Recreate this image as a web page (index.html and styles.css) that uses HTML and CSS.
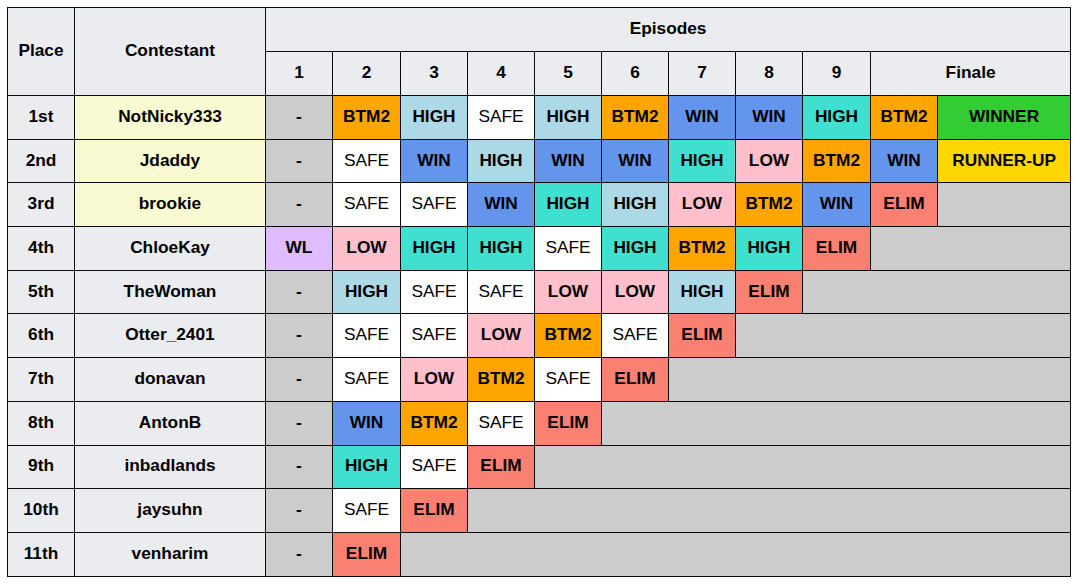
FILE: index.html
```html
<!DOCTYPE html>
<html>
<head>
<meta charset="utf-8">
<link rel="stylesheet" href="styles.css">
</head>
<body>
<div class="wrap">
<table class="progress">
  <colgroup>
    <col class="c67"><col class="c191">
    <col class="c67"><col class="c68"><col class="c67"><col class="c67"><col class="c67"><col class="c67"><col class="c67"><col class="c67"><col class="c68">
    <col class="c67"><col class="c133">
  </colgroup>
  <thead>
    <tr class="hrow">
      <th rowspan="2">Place</th>
      <th rowspan="2">Contestant</th>
      <th colspan="11">Episodes</th>
    </tr>
    <tr class="hrow">
      <th>1</th><th>2</th><th>3</th><th>4</th><th>5</th><th>6</th><th>7</th><th>8</th><th>9</th>
      <th colspan="2">Finale</th>
    </tr>
  </thead>
  <tbody>
    <tr>
      <th>1st</th><td class="name top">NotNicky333</td>
      <td class="na">-</td><td class="btm2">BTM2</td><td class="high">HIGH</td><td class="safe">SAFE</td><td class="high">HIGH</td><td class="btm2">BTM2</td><td class="win">WIN</td><td class="win">WIN</td><td class="high2">HIGH</td><td class="btm2">BTM2</td><td class="winner">WINNER</td>
    </tr>
    <tr>
      <th>2nd</th><td class="name top">Jdaddy</td>
      <td class="na">-</td><td class="safe">SAFE</td><td class="win">WIN</td><td class="high">HIGH</td><td class="win">WIN</td><td class="win">WIN</td><td class="high2">HIGH</td><td class="low">LOW</td><td class="btm2">BTM2</td><td class="win">WIN</td><td class="runner">RUNNER-UP</td>
    </tr>
    <tr>
      <th>3rd</th><td class="name top">brookie</td>
      <td class="na">-</td><td class="safe">SAFE</td><td class="safe">SAFE</td><td class="win">WIN</td><td class="high2">HIGH</td><td class="high">HIGH</td><td class="low">LOW</td><td class="btm2">BTM2</td><td class="win">WIN</td><td class="elim">ELIM</td><td class="na"></td>
    </tr>
    <tr>
      <th>4th</th><td class="name">ChloeKay</td>
      <td class="wl">WL</td><td class="low">LOW</td><td class="high2">HIGH</td><td class="high2">HIGH</td><td class="safe">SAFE</td><td class="high2">HIGH</td><td class="btm2">BTM2</td><td class="high2">HIGH</td><td class="elim">ELIM</td><td class="na" colspan="2"></td>
    </tr>
    <tr>
      <th>5th</th><td class="name">TheWoman</td>
      <td class="na">-</td><td class="high">HIGH</td><td class="safe">SAFE</td><td class="safe">SAFE</td><td class="low">LOW</td><td class="low">LOW</td><td class="high">HIGH</td><td class="elim">ELIM</td><td class="na" colspan="3"></td>
    </tr>
    <tr>
      <th>6th</th><td class="name">Otter_2401</td>
      <td class="na">-</td><td class="safe">SAFE</td><td class="safe">SAFE</td><td class="low">LOW</td><td class="btm2">BTM2</td><td class="safe">SAFE</td><td class="elim">ELIM</td><td class="na" colspan="4"></td>
    </tr>
    <tr>
      <th>7th</th><td class="name">donavan</td>
      <td class="na">-</td><td class="safe">SAFE</td><td class="low">LOW</td><td class="btm2">BTM2</td><td class="safe">SAFE</td><td class="elim">ELIM</td><td class="na" colspan="5"></td>
    </tr>
    <tr>
      <th>8th</th><td class="name">AntonB</td>
      <td class="na">-</td><td class="win">WIN</td><td class="btm2">BTM2</td><td class="safe">SAFE</td><td class="elim">ELIM</td><td class="na" colspan="6"></td>
    </tr>
    <tr>
      <th>9th</th><td class="name">inbadlands</td>
      <td class="na">-</td><td class="high2">HIGH</td><td class="safe">SAFE</td><td class="elim">ELIM</td><td class="na" colspan="7"></td>
    </tr>
    <tr>
      <th>10th</th><td class="name">jaysuhn</td>
      <td class="na">-</td><td class="safe">SAFE</td><td class="elim">ELIM</td><td class="na" colspan="8"></td>
    </tr>
    <tr>
      <th>11th</th><td class="name">venharim</td>
      <td class="na">-</td><td class="elim">ELIM</td><td class="na" colspan="9"></td>
    </tr>
  </tbody>
</table>
</div>
</body>
</html>
```

FILE: styles.css
```css
html, body {
  margin: 0;
  padding: 0;
  background: #ffffff;
}

.wrap {
  padding: 7px 0 0 7px;
}

.progress {
  border-collapse: collapse;
  table-layout: fixed;
  width: 1064px;
  font-family: "Liberation Sans", Arial, sans-serif;
  font-size: 17.3px;
  font-weight: bold;
  color: #000;
}

.c67 { width: 67px; }
.c68 { width: 68px; }
.c191 { width: 191px; }
.c133 { width: 133px; }

.progress th,
.progress td {
  border: 1px solid #0a0a0a;
  padding: 0 0 2px 0;
  text-align: center;
  vertical-align: middle;
  white-space: nowrap;
  overflow: hidden;
}

.progress th {
  background: #eaecf0;
}

.hrow {
  height: 44px;
}

.hrow th {
  padding-bottom: 3px;
}

.progress tbody tr {
  height: 43.7px;
}

.name { background: #eaecf0; }
.name.top { background: #fafad2; }

.na { background: #cccccc; }
.safe { background: #ffffff; font-weight: normal; }
.btm2 { background: #ffa500; }
.high { background: #add8e6; }
.high2 { background: #40e0d0; }
.win { background: #6495ed; }
.low { background: #ffc0cb; }
.elim { background: #fa8072; }
.winner { background: #32cd32; }
.runner { background: #ffd700; }
.wl { background: #dfbbff; }
```
